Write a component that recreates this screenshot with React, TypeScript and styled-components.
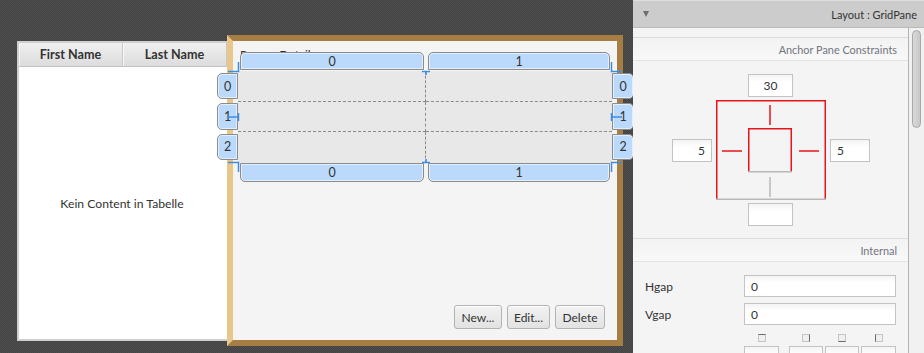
import React from 'react';
import styled, { createGlobalStyle } from 'styled-components';

const GlobalStyle = createGlobalStyle`
  html, body {
    margin: 0;
    padding: 0;
  }
  body {
    width: 924px;
    height: 353px;
    overflow: hidden;
    font-family: Lato, 'Open Sans', sans-serif;
    color: #333;
  }
  * {
    box-sizing: border-box;
  }
`;

const Window = styled.div`
  display: flex;
  width: 924px;
  height: 353px;
  overflow: hidden;
`;

/* ---------- design canvas ---------- */

const Canvas = styled.div`
  display: flex;
  align-items: flex-start;
  width: 633px;
  flex-shrink: 0;
  padding: 35px 0 0 17px;
  overflow: hidden;
  background-color: #484848;
  background-image: repeating-conic-gradient(#434343 0 25%, #4e4e4e 0 50%);
  background-size: 2px 2px;
`;

const Table = styled.div`
  display: flex;
  flex-direction: column;
  width: 210px;
  height: 300px;
  margin-top: 6px;
  flex-shrink: 0;
  background: #fff;
  border: 2px solid #cfcfcf;
  border-right: none;
`;

const TableHeader = styled.div`
  display: flex;
  height: 24px;
  flex-shrink: 0;
  background: linear-gradient(#f0f0f0, #dcdcdc);
  border-bottom: 1px solid #c4c4c4;
`;

const HeaderCell = styled.div`
  display: flex;
  align-items: center;
  justify-content: center;
  width: 104px;
  flex-shrink: 0;
  font-size: 12.6px;
  font-weight: 700;
  color: #333;
  border-right: 1px solid #c8c8c8;
  box-shadow: inset 1px 0 0 #f8f8f8;
`;

const Placeholder = styled.div`
  flex: 1;
  display: flex;
  align-items: center;
  justify-content: center;
  padding-right: 2px;
  font-size: 12.2px;
  color: #333;
`;

const AnchorPane = styled.div`
  position: relative;
  display: flex;
  flex-direction: column;
  width: 396px;
  height: 311px;
  flex-shrink: 0;
  padding: 30px 5px 11px 5px;
  background: #f4f4f4;
  background-clip: padding-box;
  border: 6px solid #a67e44;
  border-left-color: #e9c78a;
`;

const PaneLabel = styled.div`
  position: absolute;
  top: 6px;
  left: 7px;
  font-size: 12px;
  color: #333;
`;

const Grid = styled.div`
  position: relative;
  display: grid;
  grid-template-columns: 188px 186px;
  grid-template-rows: repeat(3, 1fr);
  height: 92px;
  flex-shrink: 0;
  background: #e8e8e8;
`;

const Cell = styled.div<{ $right?: boolean; $bottom?: boolean }>`
  border-right: ${(p) => (p.$right ? '1px dashed #8a8a8a' : 'none')};
  border-bottom: ${(p) => (p.$bottom ? '1px dashed #8a8a8a' : 'none')};
`;

const Handle = styled.div`
  display: flex;
  align-items: center;
  justify-content: center;
  background: #bbdafb;
  border: 1px solid #8c8c8c;
  box-shadow: inset 0 0 0 1px rgba(255, 255, 255, 0.55);
  font-size: 12.5px;
  color: #333;
`;

const ColHandles = styled.div<{ $side: 'top' | 'bottom' }>`
  position: absolute;
  left: 0;
  right: 0;
  top: ${(p) => (p.$side === 'top' ? '-19px' : '92px')};
  height: ${(p) => (p.$side === 'top' ? '18px' : '19px')};
  display: grid;
  grid-template-columns: 188px 186px;
`;

const ColHandle = styled(Handle)<{ $side: 'top' | 'bottom' }>`
  margin: 0 2px;
  border-radius: ${(p) => (p.$side === 'top' ? '5px 5px 0 0' : '0 0 5px 5px')};
`;

const RowHandles = styled.div<{ $side: 'left' | 'right' }>`
  position: absolute;
  top: 0;
  bottom: 0;
  left: ${(p) => (p.$side === 'left' ? '-21px' : '374px')};
  width: ${(p) => (p.$side === 'left' ? '21px' : '22px')};
  display: flex;
  flex-direction: column;
  gap: 4px;
  padding: 2px 0 3px;
`;

const RowHandle = styled(Handle)<{ $side: 'left' | 'right' }>`
  flex: 1;
  border-radius: ${(p) => (p.$side === 'left' ? '5px 0 0 5px' : '0 5px 5px 0')};
`;

const Marks = styled.svg`
  position: absolute;
  left: -12px;
  top: -12px;
  overflow: visible;
  pointer-events: none;
`;

const ButtonBar = styled.div`
  display: flex;
  gap: 5px;
  margin-top: auto;
  margin-right: 7px;
  align-self: flex-end;
`;

const Button = styled.button<{ $w: number }>`
  width: ${(p) => p.$w}px;
  height: 24px;
  padding: 0;
  font-family: inherit;
  font-size: 12px;
  color: #333;
  background: linear-gradient(#f2f2f2, #e2e2e2);
  border: 1px solid #b3b3b3;
  border-radius: 3px;
  box-shadow: inset 0 1px 0 #fff;
`;

/* ---------- inspector ---------- */

const Inspector = styled.aside`
  display: flex;
  flex-direction: column;
  width: 291px;
  flex-shrink: 0;
  background: #f4f4f4;
`;

const PanelHeader = styled.div`
  display: flex;
  align-items: center;
  justify-content: space-between;
  height: 28px;
  flex-shrink: 0;
  padding: 0 7px 0 10px;
  background: #cccccc;
  border-top: 1px solid #dedede;
  border-bottom: 1px solid #bababa;
  font-size: 11px;
  color: #333;
`;

const Caret = styled.span`
  width: 0;
  height: 0;
  border-left: 3.5px solid transparent;
  border-right: 3.5px solid transparent;
  border-top: 6px solid #6e6e6e;
`;

const PanelBody = styled.div`
  display: flex;
  flex: 1;
  min-height: 0;
`;

const PanelContent = styled.div`
  flex: 1;
  display: flex;
  flex-direction: column;
  padding-top: 9px;
  overflow: hidden;
`;

const SectionTitle = styled.div`
  display: flex;
  align-items: center;
  justify-content: flex-end;
  height: 24px;
  flex-shrink: 0;
  padding-right: 11px;
  background: linear-gradient(#f3f3f3, #f8f8f8);
  border-top: 1px solid #dcdcdc;
  border-bottom: 1px solid #e3e3e3;
  font-size: 10.9px;
  color: #72757f;
`;

const AnchorEditor = styled.div`
  display: flex;
  flex-direction: column;
  align-items: center;
  gap: 3px;
  padding: 13px 0 12px;
`;

const AnchorRow = styled.div`
  display: flex;
  align-items: center;
  gap: 4px;
  margin-left: 1px;
`;

const Field = styled.div<{ $w?: number; $align?: 'left' | 'center' | 'right' }>`
  display: flex;
  align-items: center;
  justify-content: ${(p) =>
    p.$align === 'right' ? 'flex-end' : p.$align === 'center' ? 'center' : 'flex-start'};
  width: ${(p) => (p.$w ? `${p.$w}px` : '100%')};
  height: 23px;
  flex-shrink: 0;
  padding: 0 6px;
  background: linear-gradient(#f4f4f4, #fff 35%);
  border: 1px solid #c3c3c3;
  font-size: 12px;
  color: #333;
`;

const Form = styled.div`
  display: grid;
  grid-template-columns: 99px 152px;
  grid-auto-rows: 22px;
  row-gap: 6px;
  padding: 13px 12px 0;
  align-items: center;
`;

const FormLabel = styled.div`
  font-size: 12px;
  color: #333;
`;

const FormField = styled(Field)`
  height: 22px;
`;

const Insets = styled.div`
  display: flex;
  margin: 9px 0 0 111px;
`;

const InsetCell = styled.div<{ $w: number; $gap: number }>`
  display: flex;
  flex-direction: column;
  align-items: center;
  gap: 4px;
  width: ${(p) => p.$w}px;
  margin-right: ${(p) => p.$gap}px;
`;

const InsetBox = styled.span<{ $edge: 'top' | 'right' | 'bottom' | 'left' }>`
  width: 8px;
  height: 8px;
  background: #efefef;
  border: 1px solid #c4c4c4;
  border-${(p) => p.$edge}-color: #6a6a6a;
`;

const InsetField = styled(Field)`
  height: 24px;
`;

const ScrollTrack = styled.div`
  width: 16px;
  flex-shrink: 0;
  padding: 2px 3px 0 3px;
  background: #f1f1f1;
  border-left: 1px solid #b3b3b3;
`;

const ScrollThumb = styled.div`
  height: 98px;
  border-radius: 5px;
  background: linear-gradient(90deg, #d8d8d8, #c8c8c8);
  border: 1px solid #a8a8a8;
`;

const BLUE = '#3d8de3';

const GridMarks = () => (
  <Marks width={398} height={116} viewBox="-12 -12 398 116">
    <g stroke={BLUE} strokeWidth={1.5} fill="none">
      <path d="M-10 0.5H0.5V-9" />
      <path d="M-10 91.5H0.5V101" />
      <path d="M384 0.5H373.5V-9" />
      <path d="M384 91.5H373.5V101" />
      <path d="M-10 46H0.5M0.5 42V50" />
      <path d="M373.5 42V50M373.5 46H384" />
      <path d="M184 0.5H192M188 0.5V4" />
      <path d="M184 91.5H192M188 91.5V88" />
    </g>
  </Marks>
);

const columns = ['0', '1'];
const rows = ['0', '1', '2'];
const insets: { edge: 'top' | 'right' | 'bottom' | 'left'; w: number; gap: number }[] = [
  { edge: 'top', w: 35, gap: 10 },
  { edge: 'right', w: 34, gap: 2 },
  { edge: 'bottom', w: 34, gap: 2 },
  { edge: 'left', w: 35, gap: 0 },
];

export default function App() {
  return (
    <>
      <GlobalStyle />
      <Window>
        <Canvas>
          <Table>
            <TableHeader>
              <HeaderCell>First Name</HeaderCell>
              <HeaderCell>Last Name</HeaderCell>
            </TableHeader>
            <Placeholder>Kein Content in Tabelle</Placeholder>
          </Table>

          <AnchorPane>
            <PaneLabel>Person Details:</PaneLabel>
            <Grid>
              {rows.map((r, ri) =>
                columns.map((c, ci) => (
                  <Cell key={`${r}-${c}`} $right={ci === 0} $bottom={ri < rows.length - 1} />
                ))
              )}
              <ColHandles $side="top">
                {columns.map((c) => (
                  <ColHandle key={c} $side="top">
                    {c}
                  </ColHandle>
                ))}
              </ColHandles>
              <ColHandles $side="bottom">
                {columns.map((c) => (
                  <ColHandle key={c} $side="bottom">
                    {c}
                  </ColHandle>
                ))}
              </ColHandles>
              <RowHandles $side="left">
                {rows.map((r) => (
                  <RowHandle key={r} $side="left">
                    {r}
                  </RowHandle>
                ))}
              </RowHandles>
              <RowHandles $side="right">
                {rows.map((r) => (
                  <RowHandle key={r} $side="right">
                    {r}
                  </RowHandle>
                ))}
              </RowHandles>
              <GridMarks />
            </Grid>
            <ButtonBar>
              <Button $w={48}>New...</Button>
              <Button $w={43}>Edit...</Button>
              <Button $w={50}>Delete</Button>
            </ButtonBar>
          </AnchorPane>
        </Canvas>

        <Inspector>
          <PanelHeader>
            <Caret />
            <span>Layout : GridPane</span>
          </PanelHeader>
          <PanelBody>
            <PanelContent>
              <SectionTitle>Anchor Pane Constraints</SectionTitle>
              <AnchorEditor>
                <Field $w={45} $align="center">
                  30
                </Field>
                <AnchorRow>
                  <Field $w={40} $align="right">
                    5
                  </Field>
                  <svg width={110} height={100} viewBox="0 0 110 100">
                    <g fill="none" strokeWidth={1.5}>
                      <path d="M0.75 100V0.75H109.25V100" stroke="#e8141a" />
                      <path d="M0 99.25H110" stroke="#b8b8b8" />
                      <path d="M32.75 72V28.75H75.25V72" stroke="#e8141a" />
                      <path d="M32 71.75H76" stroke="#b8b8b8" />
                      <path d="M54 5V25M6 51H26M83 51H103" stroke="#e8141a" />
                      <path d="M54 77V97" stroke="#b8b8b8" />
                    </g>
                  </svg>
                  <Field $w={40} $align="left">
                    5
                  </Field>
                </AnchorRow>
                <Field $w={45} $align="center" />
              </AnchorEditor>

              <SectionTitle>Internal</SectionTitle>
              <Form>
                <FormLabel>Hgap</FormLabel>
                <FormField>0</FormField>
                <FormLabel>Vgap</FormLabel>
                <FormField>0</FormField>
              </Form>
              <Insets>
                {insets.map((i) => (
                  <InsetCell key={i.edge} $w={i.w} $gap={i.gap}>
                    <InsetBox $edge={i.edge} />
                    <InsetField />
                  </InsetCell>
                ))}
              </Insets>
            </PanelContent>
            <ScrollTrack>
              <ScrollThumb />
            </ScrollTrack>
          </PanelBody>
        </Inspector>
      </Window>
    </>
  );
}
